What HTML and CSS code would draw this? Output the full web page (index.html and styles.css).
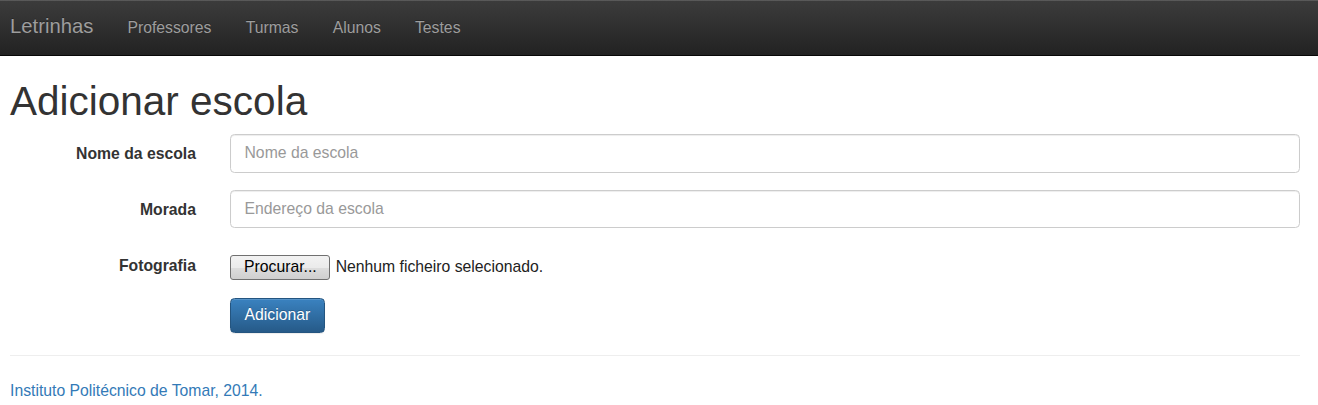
FILE: index.html
```html
<!DOCTYPE html>
<html lang="pt">
<head>
<meta charset="utf-8">
<title>Adicionar escola - Letrinhas</title>
<link rel="stylesheet" href="styles.css">
</head>
<body>
<nav class="navbar">
  <a class="brand" href="#">Letrinhas</a>
  <ul class="nav">
    <li><a href="#">Professores</a></li>
    <li><a href="#">Turmas</a></li>
    <li><a href="#">Alunos</a></li>
    <li><a href="#">Testes</a></li>
  </ul>
</nav>
<main class="container">
  <h1 class="title">Adicionar escola</h1>
  <form class="form">
    <div class="form-group">
      <label class="label" for="nome">Nome da escola</label>
      <input class="input" id="nome" type="text" placeholder="Nome da escola">
    </div>
    <div class="form-group">
      <label class="label" for="morada">Morada</label>
      <input class="input" id="morada" type="text" placeholder="Endereço da escola">
    </div>
    <div class="form-group">
      <label class="label label-file">Fotografia</label>
      <div class="file">
        <button type="button" class="file-btn">Procurar...</button>
        <span class="file-name">Nenhum ficheiro selecionado.</span>
      </div>
    </div>
    <div class="form-group last">
      <div class="offset">
        <button type="submit" class="btn-primary">Adicionar</button>
      </div>
    </div>
  </form>
  <hr class="divider">
  <footer class="footer">
    <p class="footer-text">Instituto Politécnico de Tomar, 2014.</p>
  </footer>
</main>
</body>
</html>
```

FILE: styles.css
```css
* {
  box-sizing: border-box;
}

html, body {
  margin: 0;
  padding: 0;
}

body {
  font-family: "Liberation Sans", Arial, Helvetica, sans-serif;
  font-size: 15.75px;
  line-height: 22.5px;
  color: #333;
  background: #fff;
}

.navbar {
  height: 56px;
  display: flex;
  align-items: flex-start;
  padding-left: 10px;
  background: linear-gradient(to bottom, #3c3c3c 0, #222 100%);
  border-bottom: 1px solid #080808;
  box-shadow: inset 0 1px 0 rgba(255, 255, 255, .15);
}

.brand {
  display: block;
  font-size: 20.25px;
  line-height: 22.5px;
  padding: 15.2px 17px 0 0;
  color: #9d9d9d;
  text-decoration: none;
  text-shadow: 0 -1px 0 rgba(0, 0, 0, .25);
}

.nav {
  list-style: none;
  margin: 0;
  padding: 0;
  display: flex;
}

.nav a {
  display: block;
  padding: 16.5px 17.1px 0;
  color: #9d9d9d;
  text-decoration: none;
  text-shadow: 0 -1px 0 rgba(0, 0, 0, .25);
}

.container {
  margin: 0 18px 0 10px;
}

.title {
  font-size: 40.5px;
  line-height: 44.55px;
  font-weight: 500;
  margin: 22.5px 0 11.25px;
  color: #333;
}

.form {
  margin: 0;
}

.form-group {
  display: grid;
  grid-template-columns: 186px 1fr;
  column-gap: 34px;
  margin-bottom: 17.5px;
}

.form-group.last {
  margin-bottom: 0;
}

.label {
  text-align: right;
  font-weight: bold;
  padding-top: 8.5px;
  color: #333;
}

.label-file {
  padding-top: 9.5px;
}

.input {
  display: block;
  width: 100%;
  height: 38.25px;
  padding: 6.75px 13.5px;
  font-family: inherit;
  font-size: 15.75px;
  line-height: 22.5px;
  color: #555;
  background: #fff;
  border: 1px solid #ccc;
  border-radius: 4.5px;
  box-shadow: inset 0 1px 1px rgba(0, 0, 0, .075);
  outline: none;
}

.input::placeholder {
  color: #999;
}

.file {
  display: flex;
  align-items: center;
  padding-top: 8.5px;
  height: 34.5px;
  align-self: start;
}

.file-btn {
  height: 25px;
  padding: 0 12px 0 13px;
  font-family: inherit;
  font-size: 15.75px;
  line-height: 22px;
  color: #000;
  background: linear-gradient(to bottom, #f2f2f2 0, #ebebeb 50%, #dddddd 51%, #cfcfcf 100%);
  border: 1px solid #707070;
  border-radius: 3px;
}

.file-name {
  margin-left: 6px;
  color: #222;
}

.offset {
  grid-column: 2;
}

.btn-primary {
  display: block;
  height: 35.5px;
  padding: 0 13.5px;
  font-family: inherit;
  font-size: 15.75px;
  line-height: 22.5px;
  color: #fff;
  background: linear-gradient(to bottom, #3a82c0 0, #265a88 100%);
  border: 1px solid #245580;
  border-radius: 4.5px;
  text-shadow: 0 -1px 0 rgba(0, 0, 0, .2);
  box-shadow: inset 0 1px 0 rgba(255, 255, 255, .15), 0 1px 1px rgba(0, 0, 0, .075);
}

.divider {
  height: 0;
  margin: 22px 0 24px;
  border: 0;
  border-top: 1px solid #eee;
}

.footer-text {
  margin: 0 0 11.25px;
  color: #337ab7;
}
```
